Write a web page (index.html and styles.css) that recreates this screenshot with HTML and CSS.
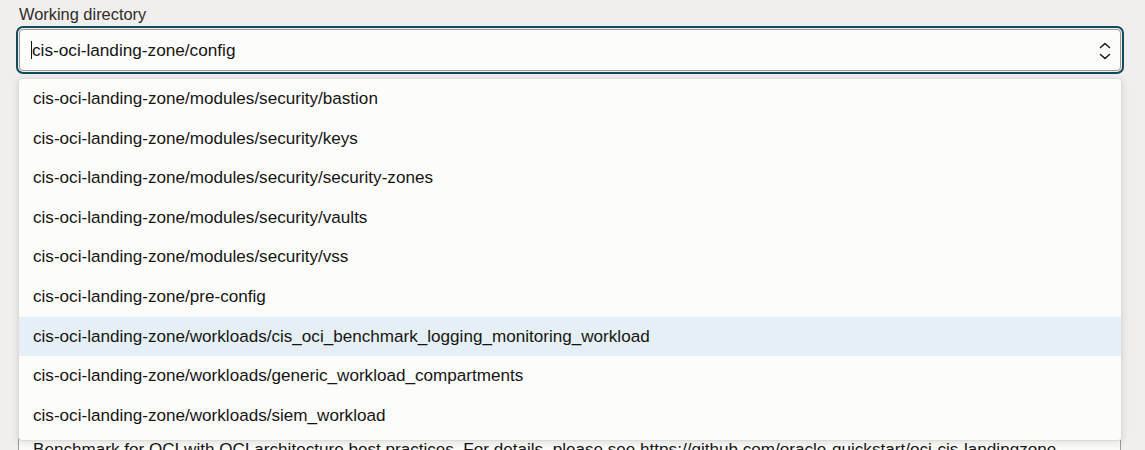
FILE: index.html
```html
<!DOCTYPE html>
<html lang="en">
<head>
<meta charset="utf-8">
<title>Working directory</title>
<link rel="stylesheet" href="styles.css">
</head>
<body>
<div class="page">
  <div class="field">
    <label class="label">Working directory</label>
    <div class="select">
      <div class="select-value"><span class="caret"></span>cis-oci-landing-zone/config</div>
      <svg class="chevrons" width="12" height="18" viewBox="0 0 12 18" aria-hidden="true">
        <path d="M1.5 5.5 L6 1.5 L10.5 5.5" fill="none" stroke="#161513" stroke-width="1.5" stroke-linecap="round" stroke-linejoin="round"/>
        <path d="M1.5 12.5 L6 16.5 L10.5 12.5" fill="none" stroke="#161513" stroke-width="1.5" stroke-linecap="round" stroke-linejoin="round"/>
      </svg>
      <ul class="menu">
        <li class="option">cis-oci-landing-zone/modules/security/bastion</li>
        <li class="option">cis-oci-landing-zone/modules/security/keys</li>
        <li class="option">cis-oci-landing-zone/modules/security/security-zones</li>
        <li class="option">cis-oci-landing-zone/modules/security/vaults</li>
        <li class="option">cis-oci-landing-zone/modules/security/vss</li>
        <li class="option">cis-oci-landing-zone/pre-config</li>
        <li class="option option-hover">cis-oci-landing-zone/workloads/cis_oci_benchmark_logging_monitoring_workload</li>
        <li class="option">cis-oci-landing-zone/workloads/generic_workload_compartments</li>
        <li class="option">cis-oci-landing-zone/workloads/siem_workload</li>
      </ul>
    </div>
  </div>
  <div class="field desc-field">
    <div class="desc">
      <p class="desc-line">Benchmark for OCI with OCI architecture best practices. For details, please see https://github.com/oracle-quickstart/oci-cis-landingzone</p>
    </div>
  </div>
</div>
</body>
</html>
```

FILE: styles.css
```css
* { box-sizing: border-box; }

html, body {
  margin: 0;
  padding: 0;
  height: 100%;
  overflow: hidden;
}

body {
  background: #f1efed;
  font-family: "Liberation Sans", Arial, sans-serif;
  color: #161513;
}

.page {
  padding: 5px 24px 0 19px;
}

.field {
  display: flex;
  flex-direction: column;
}

.label {
  font-size: 16.4px;
  line-height: 18px;
  color: #2f2c29;
  margin-bottom: 6px;
}

.select {
  position: relative;
  height: 42px;
  border: 1px solid #9e9891;
  border-radius: 4px;
  background: #fcfcfb;
  outline: 2px solid #0f4b5c;
  outline-offset: 1px;
  display: flex;
  align-items: center;
  padding: 0 12px 0 12px;
}

.select-value {
  flex: 1;
  font-size: 17.2px;
  line-height: 20px;
  display: flex;
  align-items: center;
}

.caret {
  display: inline-block;
  width: 1px;
  height: 18px;
  background: #161513;
  margin-left: -1px;
}

.chevrons {
  display: block;
  margin-right: -3px;
  margin-top: 1px;
}

.menu {
  position: absolute;
  left: -2px;
  right: -2px;
  top: 48px;
  margin: 0;
  padding: 0 0 5px 0;
  list-style: none;
  background: #fcfcfb;
  border: 1px solid #dedbd8;
  border-radius: 4px;
  box-shadow: 0 2px 8px rgba(0, 0, 0, 0.12);
  z-index: 10;
}

.option {
  height: 39.6px;
  line-height: 39.6px;
  padding-left: 14px;
  font-size: 17.1px;
  white-space: nowrap;
  color: #161513;
}

.option-hover {
  background: #e4f0f5;
}

.desc-field {
  margin-top: 357px;
}

.desc {
  margin-left: -1px;
  border: 1px solid #9e9891;
  border-radius: 4px;
  background: #fcfcfb;
  padding: 9px 14px;
}

.desc-line {
  margin: 0;
  font-size: 17.1px;
  line-height: 24px;
  white-space: nowrap;
}
```
